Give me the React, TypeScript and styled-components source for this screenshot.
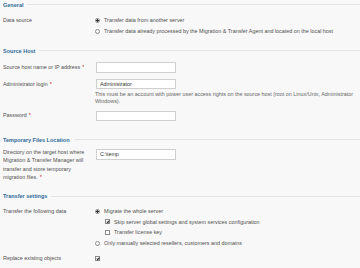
import React from 'react'
import styled, { createGlobalStyle } from 'styled-components'

const GlobalStyle = createGlobalStyle`
  html, body {
    margin: 0;
    padding: 0;
    background: #f8f8f8;
  }
  body {
    font-family: 'Liberation Sans', Arial, sans-serif;
    font-size: 5.4px;
    color: #505050;
  }
`

const Page = styled.div`
  width: 360px;
  height: 268px;
  overflow: hidden;
  background: #f8f8f8;
`

const Section = styled.section<{ gap?: number }>`
  padding-top: ${({ gap }) => gap ?? 0}px;
`

const Title = styled.div`
  display: flex;
  align-items: center;
  gap: 4px;
  height: 9px;
  padding-left: 3px;
  font-size: 5.5px;
  font-weight: bold;
  color: #2e6a98;

  &::after {
    content: '';
    flex: 1;
    height: 1px;
    background: #e3e3e3;
  }
`

const Row = styled.div<{ top?: number; start?: boolean }>`
  display: grid;
  grid-template-columns: 92px 1fr;
  align-items: ${({ start }) => (start ? 'start' : 'center')};
  padding-left: 3px;
  margin-top: ${({ top }) => top ?? 6}px;
`

const Label = styled.div<{ lines?: boolean }>`
  line-height: ${({ lines }) => (lines ? '8.4px' : '10.6px')};
  white-space: nowrap;
`

const Req = styled.span`
  color: #d42020;
  margin-left: 2px;
`

const Field = styled.div`
  display: flex;
  flex-direction: column;
`

const Input = styled.div<{ offset?: number }>`
  box-sizing: border-box;
  width: 80px;
  height: 10.5px;
  margin-left: 1px;
  margin-top: ${({ offset }) => offset ?? 0}px;
  border: 1px solid #cfcfcf;
  background: #fff;
  padding-left: 3px;
  line-height: 8.5px;
  color: #333;
`

const Hint = styled.div`
  margin-top: 2px;
  line-height: 7px;
  color: #666;
  white-space: nowrap;
`

const Option = styled.div<{ indent?: boolean }>`
  display: flex;
  align-items: center;
  gap: 4px;
  height: 10.7px;
  padding-left: ${({ indent }) => (indent ? '10px' : '0')};
  white-space: nowrap;
`

const Radio = styled.span<{ checked?: boolean }>`
  box-sizing: border-box;
  width: 5px;
  height: 5px;
  border-radius: 50%;
  border: 1px solid #8a8a8a;
  background: ${({ checked }) =>
    checked ? 'radial-gradient(circle, #333 0 1.2px, #fff 1.4px)' : '#fff'};
`

const Box = styled.span<{ checked?: boolean }>`
  position: relative;
  box-sizing: border-box;
  width: 5px;
  height: 5px;
  border: 1px solid #8a8a8a;
  background: #fff;

  &::after {
    content: '';
    display: ${({ checked }) => (checked ? 'block' : 'none')};
    position: absolute;
    left: 0.6px;
    top: -0.2px;
    width: 1.2px;
    height: 2.2px;
    border: solid #333;
    border-width: 0 0.9px 0.9px 0;
    transform: rotate(40deg);
  }
`

const App: React.FC = () => (
  <Page>
    <GlobalStyle />
    <Section>
      <Title>General</Title>
      <Row top={6} start>
        <Label>Data source</Label>
        <Field>
          <Option>
            <Radio checked />
            Transfer data from another server
          </Option>
          <Option>
            <Radio />
            Transfer data already processed by the Migration &amp; Transfer Agent and located on the local host
          </Option>
        </Field>
      </Row>
    </Section>

    <Section gap={10}>
      <Title>Source Host</Title>
      <Row top={7}>
        <Label>
          Source host name or IP address<Req>*</Req>
        </Label>
        <Input />
      </Row>
      <Row top={6} start>
        <Label>
          Administrator login<Req>*</Req>
        </Label>
        <Field>
          <Input>Administrator</Input>
          <Hint>
            This must be an account with power user access rights on the source host (root on Linux/Unix, Administrator
            <br />
            Windows).
          </Hint>
        </Field>
      </Row>
      <Row top={5}>
        <Label>
          Password<Req>*</Req>
        </Label>
        <Input />
      </Row>
    </Section>

    <Section gap={14}>
      <Title>Temporary Files Location</Title>
      <Row top={4} start>
        <Label lines>
          Directory on the target host where
          <br />
          Migration &amp; Transfer Manager will
          <br />
          transfer and store temporary
          <br />
          migration files.<Req>*</Req>
        </Label>
        <Input offset={1}>C:\temp</Input>
      </Row>
    </Section>

    <Section gap={10}>
      <Title>Transfer settings</Title>
      <Row top={5} start>
        <Label>Transfer the following data</Label>
        <Field>
          <Option>
            <Radio checked />
            Migrate the whole server
          </Option>
          <Option indent>
            <Box checked />
            Skip server global settings and system services configuration
          </Option>
          <Option indent>
            <Box />
            Transfer license key
          </Option>
          <Option>
            <Radio />
            Only manually selected resellers, customers and domains
          </Option>
        </Field>
      </Row>
      <Row top={5}>
        <Label>Replace existing objects</Label>
        <Option>
          <Box checked />
        </Option>
      </Row>
    </Section>
  </Page>
)

export default App
